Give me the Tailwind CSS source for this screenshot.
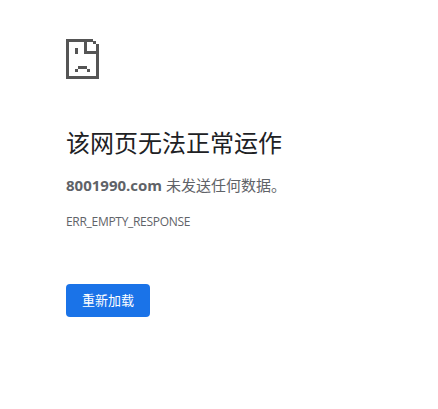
<!DOCTYPE html>
<html lang="zh-CN">
<head>
  <meta charset="UTF-8" />
  <title>8001990.com</title>
  <script src="https://cdn.jsdelivr.net/npm/@tailwindcss/browser@4"></script>
</head>
<body class="bg-white overflow-hidden font-['Open_Sans','Noto_Sans_CJK_SC',sans-serif] text-[#5f6368]">
  <div class="pl-[66px] pt-[39px] w-[400px]">
    <svg class="w-[33px] h-[40px] block" viewBox="0 0 33 40" fill="#555555" shape-rendering="crispEdges">
      <path d="M0 0H27V3H3V37H30V5H33V40H0Z"/>
      <path d="M27 2H30V5H27Z"/>
      <path d="M18 3H21V12H33V15H18Z"/>
      <path d="M9 9H12V15H9Z"/>
      <path d="M12 27H21V30H12ZM9 30H12V33H9ZM21 30H24V33H21Z"/>
    </svg>
    <h1 class="mt-[48px] text-[24px] leading-[32px] font-normal text-[#202124]">该网页无法正常运作</h1>
    <p class="mt-[16px] text-[15px] leading-[20px]"><strong class="font-bold">8001990.com</strong> 未发送任何数据。</p>
    <p class="mt-[19px] text-[12px] leading-[16px] tracking-[-0.3px]">ERR_EMPTY_RESPONSE</p>
    <button class="mt-[54px] block w-[84px] h-[33px] rounded-[4px] bg-[#1a73e8] text-white text-[13px] font-normal">重新加载</button>
  </div>
</body>
</html>
